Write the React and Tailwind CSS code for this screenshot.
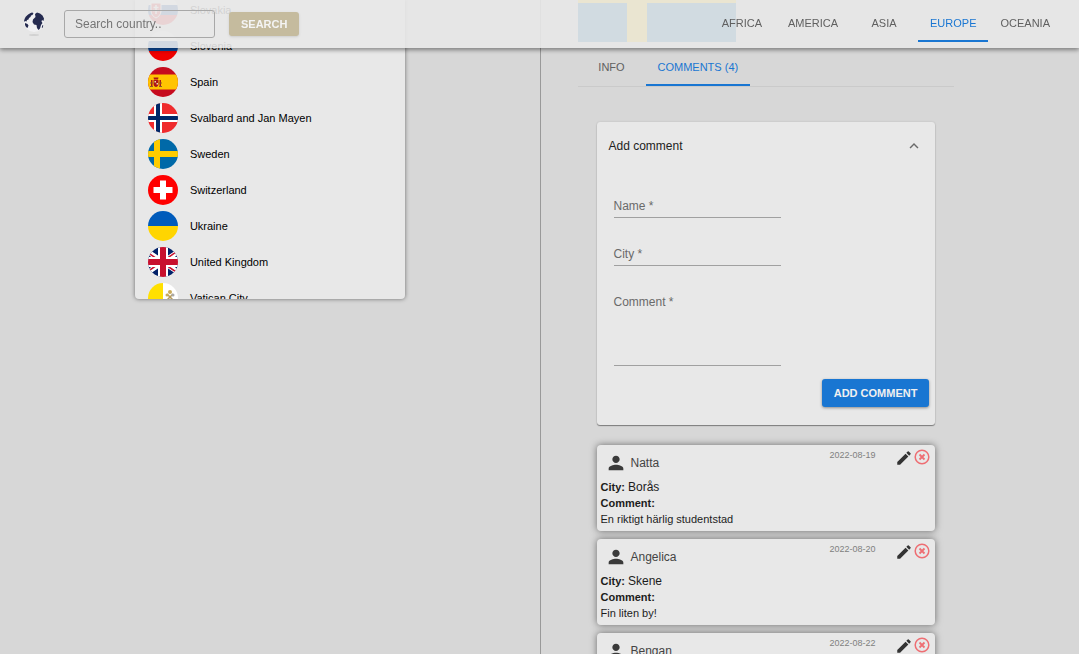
import { useState } from "react";
import { MdExpandLess, MdPerson, MdEdit } from "react-icons/md";

const regions = ["Africa", "America", "Asia", "Europe", "Oceania"];

const countries = [
  "Slovakia",
  "Slovenia",
  "Spain",
  "Svalbard and Jan Mayen",
  "Sweden",
  "Switzerland",
  "Ukraine",
  "United Kingdom",
  "Vatican City",
];

const comments = [
  {
    name: "Natta",
    city: "Borås",
    text: "En riktigt härlig studentstad",
    date: "2022-08-19",
  },
  {
    name: "Angelica",
    city: "Skene",
    text: "Fin liten by!",
    date: "2022-08-20",
  },
  {
    name: "Bengan",
    city: "",
    text: "",
    date: "2022-08-22",
  },
];

const flags = {
  Slovakia: (
    <>
      <path fill="#fff" d="M0 0h30v10H0z" />
      <path fill="#0b4ea2" d="M0 10h30v10H0z" />
      <path fill="#ee1c25" d="M0 20h30v10H0z" />
      <path
        fill="#ee1c25"
        stroke="#fff"
        d="M3 8h10v8c0 4-3 6-5 7-2-1-5-3-5-7z"
      />
      <path stroke="#fff" strokeWidth="1.5" d="M8 10v9M5.5 12.5h5M5 15.5h6" />
    </>
  ),
  Slovenia: (
    <>
      <path fill="#fff" d="M0 0h30v10H0z" />
      <path fill="#0c4da2" d="M0 10h30v10H0z" />
      <path fill="#f00000" d="M0 20h30v10H0z" />
    </>
  ),
  Spain: (
    <>
      <path fill="#c60b1e" d="M0 0h30v30H0z" />
      <path fill="#ffc400" d="M0 7.5h30v15H0z" />
      <path
        fill="#ad1519"
        d="M3 13h1.500v6H3zM5.500 13h5v4c0 2-1.500 3-2.500 3s-2.500-1-2.500-3zM11.500 13H13v6h-1.500zM5.500 10.500h5l-.5 2H6z"
      />
      <path fill="#e8d5b0" d="M6.500 14H8v1.500H6.500zM8.500 16H10v1.500H8.500z" />
      <path stroke="#8a5a2a" d="M2 16h3M11 16h3M2 19.500h3M11 19.500h3" />
    </>
  ),
  "Svalbard and Jan Mayen": (
    <>
      <path fill="#ef2b2d" d="M0 0h30v30H0z" />
      <path stroke="#fff" strokeWidth="8" d="M10 0v30M0 15h30" />
      <path stroke="#002868" strokeWidth="4" d="M10 0v30M0 15h30" />
    </>
  ),
  Sweden: (
    <>
      <path fill="#0069a8" d="M0 0h30v30H0z" />
      <path stroke="#fecc00" strokeWidth="6" d="M9 0v30M0 15h30" />
    </>
  ),
  Switzerland: (
    <>
      <path fill="#f00" d="M0 0h30v30H0z" />
      <path stroke="#fff" strokeWidth="6" d="M15 5.5v19M5.5 15h19" />
    </>
  ),
  Ukraine: (
    <>
      <path fill="#005bbb" d="M0 0h30v15H0z" />
      <path fill="#ffd500" d="M0 15h30v15H0z" />
    </>
  ),
  "United Kingdom": (
    <>
      <path fill="#012169" d="M0 0h30v30H0z" />
      <path stroke="#fff" strokeWidth="5" d="M-4 2 34 28M34 2-4 28" />
      <path stroke="#c8102e" strokeWidth="1.5" d="M-4 3 34 29M34 1-4 27" />
      <path stroke="#fff" strokeWidth="10" d="M15 0v30M0 15h30" />
      <path stroke="#c8102e" strokeWidth="6" d="M15 0v30M0 15h30" />
    </>
  ),
  "Vatican City": (
    <>
      <path fill="#ffe000" d="M0 0h15v30H0z" />
      <path fill="#fff" d="M15 0h15v30H15z" />
      <path stroke="#b59a5b" strokeWidth="1.5" d="m19 11 6 6M25 11l-6 6" />
      <circle cx="22" cy="9" r="2" fill="#c9ab5a" />
      <circle cx="19" cy="12" r="1.5" fill="#c9ab5a" />
      <circle cx="25" cy="12" r="1.5" fill="#a8a8a8" />
    </>
  ),
};

function Flag({ country }) {
  return (
    <svg
      viewBox="0 0 30 30"
      fill="none"
      aria-hidden="true"
      className="w-[30px] h-[30px] rounded-full shrink-0"
    >
      {flags[country]}
    </svg>
  );
}

function Logo() {
  return (
    <svg viewBox="0 0 24 26" className="w-6 h-[26px]" aria-hidden="true">
      <circle cx="12" cy="11" r="10" fill="#f1f1f3" />
      <path
        fill="#252b50"
        d="M5 4.500C6.500 3 8 2 10 1.500l1.500.5L10.500 4l-1.500.5L8.500 6 7 7 6.500 8.500 5 9l-.5 1.500L3 10l-1 1C2 8.500 3 6 5 4.500z"
      />
      <path
        fill="#252b50"
        d="M13 3l2-1.500 3 1 2.500 2L22 7.500l-.5 2.500-1.500-1-.5 1.500 1 1.500-1.500 2-1 3.500-1.500 1.500-1.500-2-.5-3-2.500-.5-1.500-2.500.5-2.500 1.500-1.500 1-1z"
      />
      <path fill="#252b50" d="M3 12l2.500 1 1 1.500L5.500 17 4 16l-1-2zM20.500 14l.8.5-.8 2.500-.8-.5z" />
      <ellipse cx="12" cy="24" rx="5" ry="1" fill="#d2d2d2" />
    </svg>
  );
}

function Tab({ label, active, onClick }) {
  return (
    <button
      type="button"
      role="tab"
      aria-selected={active}
      onClick={onClick}
      className={`min-w-[68px] h-[38px] px-3 pt-0.5 border-b-2 text-[11px] leading-4 uppercase whitespace-nowrap ${
        active
          ? "border-[#1976d2] text-[#1976d2]"
          : "border-transparent text-[#606060]"
      }`}
    >
      {label}
    </button>
  );
}

function Header() {
  const [region, setRegion] = useState("Europe");

  return (
    <header className="fixed inset-x-0 top-0 z-10 h-12 flex items-center justify-between pl-[22px] pr-[17px] bg-[#e8e8e8]/90 shadow-[0_2px_4px_rgba(0,0,0,0.3),0_1px_6px_rgba(0,0,0,0.2)]">
      <div className="flex items-center">
        <a href="#home" aria-label="Home">
          <Logo />
        </a>
        <form
          className="flex items-center ml-[18px]"
          onSubmit={(e) => e.preventDefault()}
        >
          <input
            type="text"
            aria-label="Search country"
            placeholder="Search country.."
            className="w-[151px] h-7 px-2.5 rounded-[3px] border border-[#a8a8a8] text-xs placeholder:text-[#757575] focus:outline-none"
          />
          <button
            type="submit"
            className="ml-3.5 h-6 px-3 rounded-[3px] bg-[#c5bb9e] text-[11px] font-bold text-[#f4f4f4] shadow-sm"
          >
            SEARCH
          </button>
        </form>
      </div>
      <nav role="tablist" className="flex mb-0.5">
        {regions.map((item) => (
          <Tab
            key={item}
            label={item}
            active={item === region}
            onClick={() => setRegion(item)}
          />
        ))}
      </nav>
    </header>
  );
}

function CountryList() {
  return (
    <div className="w-1/2 h-[299px] mx-auto overflow-hidden rounded-b bg-[#e8e8e8] shadow-[0_0_4px_rgba(0,0,0,0.5)]">
      <ul className="-mt-2">
        {countries.map((country) => (
          <li key={country} className="h-9 flex items-center gap-3 px-[13px]">
            <Flag country={country} />
            <span className="text-[11px] leading-4 text-black">{country}</span>
          </li>
        ))}
      </ul>
    </div>
  );
}

function Field({ id, label, multiline }) {
  const [value, setValue] = useState("");
  const Control = multiline ? "textarea" : "input";

  return (
    <div className="relative w-[167px]">
      {!value && (
        <label
          htmlFor={id}
          className="absolute left-0 top-0 text-xs leading-4 text-[#6a6a6a] pointer-events-none"
        >
          {label} *
        </label>
      )}
      <Control
        id={id}
        required
        value={value}
        onChange={(e) => setValue(e.target.value)}
        className={`block w-full border-b border-[#a0a0a0] text-xs leading-4 resize-none focus:outline-none ${
          multiline ? "h-[72px]" : "h-5"
        }`}
      />
    </div>
  );
}

function CommentForm() {
  const [open, setOpen] = useState(true);

  return (
    <section className="rounded-[3px] bg-[#e8e8e8] shadow-[0_1px_1px_rgba(0,0,0,0.4),0_0_2px_rgba(0,0,0,0.15)]">
      <button
        type="button"
        aria-expanded={open}
        onClick={() => setOpen(!open)}
        className="w-full h-12 px-3 flex items-center justify-between text-xs text-[#222]"
      >
        Add comment
        <MdExpandLess className="w-[18px] h-[18px] text-[#6a6a6a]" />
      </button>
      {open && (
        <form
          className="pt-7 pb-[18px] pl-[17px] pr-1.5"
          onSubmit={(e) => e.preventDefault()}
        >
          <div className="space-y-7">
            <Field id="name" label="Name" />
            <Field id="city" label="City" />
            <Field id="comment" label="Comment" multiline />
          </div>
          <div className="flex justify-end mt-[13px]">
            <button
              type="submit"
              className="h-7 px-3 rounded-[3px] bg-[#1976d2] text-[11px] font-bold text-[#f0f0f0] shadow-[0_1px_3px_rgba(0,0,0,0.4)]"
            >
              ADD COMMENT
            </button>
          </div>
        </form>
      )}
    </section>
  );
}

function DeleteIcon() {
  return (
    <svg
      viewBox="0 0 16 16"
      fill="none"
      stroke="currentColor"
      className="w-4 h-4"
      aria-hidden="true"
    >
      <circle cx="8" cy="8" r="6.8" strokeWidth="1.5" />
      <path strokeWidth="1.8" d="m5.5 5.5 5 5M10.5 5.5l-5 5" />
    </svg>
  );
}

function Comment({ comment }) {
  return (
    <li className="h-[86px] p-1 rounded bg-[#e8e8e8] text-[11px] leading-4 text-[#1c1c1c] shadow-[0_0_7px_rgba(0,0,0,0.5)]">
      <div className="h-[30px] flex items-start">
        <div className="flex items-center gap-1 pt-[3px] pl-1">
          <MdPerson className="w-[22px] h-[22px] text-[#3a3a3a]" />
          <span className="text-xs text-[#444]">{comment.name}</span>
        </div>
        <time className="ml-auto mr-5 -mt-0.5 text-[9px] leading-4 text-[#808080]">
          {comment.date}
        </time>
        <button type="button" aria-label="Edit comment">
          <MdEdit className="w-[18px] h-[18px] text-[#333]" />
        </button>
        <button
          type="button"
          aria-label="Delete comment"
          className="ml-px mr-px text-[#ee6e73]"
        >
          <DeleteIcon />
        </button>
      </div>
      <p>
        <b>City:</b> <span className="text-xs">{comment.city}</span>
      </p>
      <p className="font-bold">Comment:</p>
      <p>{comment.text}</p>
    </li>
  );
}

function CountryDetails() {
  const [tab, setTab] = useState("comments");

  return (
    <div className="w-[70%] ml-[37px]">
      <svg
        viewBox="0 0 158 100"
        className="w-[158px] h-[100px] -mt-[58px]"
        aria-label="Flag of Sweden"
      >
        <path fill="#006aa7" d="M0 0h158v100H0z" />
        <path fill="#fecc00" d="M49 0h20v100H49zM0 41h158v20H0z" />
      </svg>
      <div role="tablist" className="flex mt-1.5 border-b border-[#cacaca]">
        <Tab
          label="Info"
          active={tab === "info"}
          onClick={() => setTab("info")}
        />
        <Tab
          label="Comments (4)"
          active={tab === "comments"}
          onClick={() => setTab("comments")}
        />
      </div>
      <div className="px-[19px] pt-[35px] pb-4">
        <CommentForm />
        <ul className="mt-5 space-y-2">
          {comments.map((comment) => (
            <Comment key={comment.date} comment={comment} />
          ))}
        </ul>
      </div>
    </div>
  );
}

function App() {
  return (
    <div className="h-screen flex bg-[#d7d7d7] font-['Liberation_Sans',Arial,sans-serif]">
      <Header />
      <main className="flex w-full">
        <div className="w-1/2">
          <CountryList />
        </div>
        <div className="w-1/2 overflow-y-auto [scrollbar-width:none] border-l border-[#999]">
          <CountryDetails />
        </div>
      </main>
    </div>
  );
}

export default App;
